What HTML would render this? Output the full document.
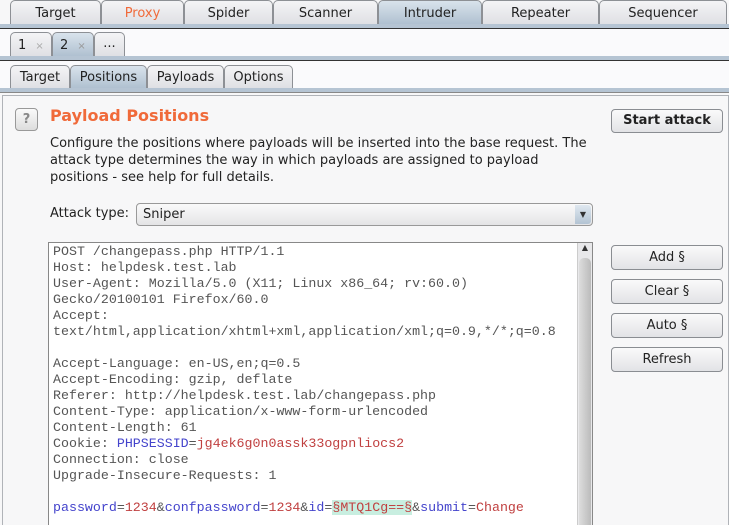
<!DOCTYPE html>
<html><head><style>
*{box-sizing:border-box;margin:0;padding:0}
html,body{width:729px;height:525px;overflow:hidden}
body{background:#f7f7f8;font-family:"DejaVu Sans","Liberation Sans",sans-serif;font-size:13px;color:#222;position:relative}
.abs{position:absolute}
.tab{position:absolute;border:1px solid #8d9095;border-bottom:none;border-radius:5px 5px 0 0;background:linear-gradient(#f4f4f6,#dedfe3);text-align:center;font-size:13px;color:#222}
.sel{background:linear-gradient(#d9e3ec,#aebfcf)}
.line{position:absolute;left:0;width:729px}
.btn{position:absolute;border:1px solid #8a8d92;border-radius:4px;background:linear-gradient(#fafafa,#e2e3e6);text-align:center;font-size:13px;color:#222}
pre{font-family:"Liberation Mono",monospace;font-size:13.3px;line-height:16px;color:#555}
.b{color:#4444cc}.r{color:#c04040}
</style></head><body>
<div class="tab" style="left:10px;top:0;width:91px;height:25px;line-height:25px">Target</div>
<div class="tab" style="left:101px;top:0;width:83px;height:25px;line-height:25px;color:#f06a3a">Proxy</div>
<div class="tab" style="left:184px;top:0;width:89px;height:25px;line-height:25px">Spider</div>
<div class="tab" style="left:273px;top:0;width:105px;height:25px;line-height:25px">Scanner</div>
<div class="tab sel" style="left:378px;top:0;width:104px;height:25px;line-height:25px">Intruder</div>
<div class="tab" style="left:482px;top:0;width:117px;height:25px;line-height:25px">Repeater</div>
<div class="tab" style="left:599px;top:0;width:128px;height:25px;line-height:25px">Sequencer</div>
<div class="line" style="top:24px;height:5px;background:#b5c4d3;border-bottom:1px solid #333"></div>
<div class="line" style="top:29px;height:28px;background:#fafafc"></div>
<div class="tab" style="left:10px;top:32px;width:42px;height:25px;line-height:25px;text-align:left;padding-left:7px">1 <span style="color:#aaa;font-size:10px;margin-left:5px">×</span></div>
<div class="tab sel" style="left:52px;top:32px;width:42px;height:25px;line-height:25px;text-align:left;padding-left:7px">2 <span style="color:#999;font-size:10px;margin-left:5px">×</span></div>
<div class="tab" style="left:94px;top:32px;width:31px;height:25px;line-height:22px">...</div>
<div class="line" style="top:56px;height:5px;background:#b5c4d3;border-bottom:1px solid #333"></div>
<div class="line" style="top:61px;height:28px;background:#fafafc"></div>
<div class="tab" style="left:10px;top:65px;width:60px;height:24px;line-height:24px">Target</div>
<div class="tab sel" style="left:70px;top:65px;width:77px;height:24px;line-height:24px">Positions</div>
<div class="tab" style="left:147px;top:65px;width:77px;height:24px;line-height:24px">Payloads</div>
<div class="tab" style="left:224px;top:65px;width:69px;height:24px;line-height:24px">Options</div>
<div class="line" style="top:88px;height:5px;background:#b5c4d3;border-bottom:1px solid #888"></div>
<div class="abs" style="left:2px;top:95px;width:727px;height:430px;border:1px solid #b0b3b8;border-bottom:none;background:#f7f7f8"></div>
<div class="abs" style="left:15px;top:108px;width:23px;height:23px;border:1px solid #999;border-radius:4px;background:linear-gradient(#fafafa,#ddd);text-align:center;line-height:21px;color:#888;font-weight:bold;font-size:13px">?</div>
<div class="abs" style="left:50px;top:106px;font-size:16px;font-weight:bold;color:#f06a3a">Payload Positions</div>
<div class="abs" style="left:50px;top:135px;width:548px;line-height:17px;font-size:13px">Configure the positions where payloads will be inserted into the base request. The attack type determines the way in which payloads are assigned to payload positions - see help for full details.</div>
<div class="abs" style="left:50px;top:206px">Attack type:</div>
<div class="abs" style="left:136px;top:203px;width:457px;height:23px;border:1px solid #999;border-radius:4px;background:linear-gradient(#fafafa,#e4e4e6);padding-left:6px;line-height:21px">Sniper</div>
<div class="abs" style="left:575px;top:205px;width:16px;height:19px;background:linear-gradient(#dfe8f0,#b3c3d3);border-radius:0 3px 3px 0;font-size:8px;text-align:center;line-height:19px;color:#333">▼</div>
<div class="btn" style="left:611px;top:109px;width:112px;height:24px;line-height:22px;font-weight:bold">Start attack</div>
<div class="abs" style="left:48px;top:242px;width:545px;height:283px;border:1px solid #888;border-bottom:none;background:#fff"></div>
<div class="abs" style="left:577px;top:243px;width:15px;height:282px;background:#e8e8ea;border-left:1px solid #ccc"></div>
<div class="abs" style="left:578px;top:243px;width:14px;height:12px;font-size:8px;text-align:center;color:#333">▲</div>
<div class="abs" style="left:579px;top:258px;width:12px;height:267px;background:linear-gradient(90deg,#ddd,#bbb);border-radius:5px 5px 0 0"></div>
<pre class="abs" style="left:53px;top:244px">POST /changepass.php HTTP/1.1
Host: helpdesk.test.lab
User-Agent: Mozilla/5.0 (X11; Linux x86_64; rv:60.0)
Gecko/20100101 Firefox/60.0
Accept:
text/html,application/xhtml+xml,application/xml;q=0.9,*/*;q=0.8

Accept-Language: en-US,en;q=0.5
Accept-Encoding: gzip, deflate
Referer: http://helpdesk.test.lab/changepass.php
Content-Type: application/x-www-form-urlencoded
Content-Length: 61
Cookie: <span class="b">PHPSESSID</span>=<span class="r">jg4ek6g0n0assk33ogpnliocs2</span>
Connection: close
Upgrade-Insecure-Requests: 1

<span class="b">password</span>=<span class="r">1234</span>&amp;<span class="b">confpassword</span>=<span class="r">1234</span>&amp;<span class="b">id</span>=<span class="r" style="background:#c8eee0">§MTQ1Cg==§</span>&amp;<span class="b">submit</span>=<span class="r">Change</span></pre>
<div class="btn" style="left:611px;top:245px;width:112px;height:25px;line-height:23px">Add §</div>
<div class="btn" style="left:611px;top:279px;width:112px;height:25px;line-height:23px">Clear §</div>
<div class="btn" style="left:611px;top:313px;width:112px;height:25px;line-height:23px">Auto §</div>
<div class="btn" style="left:611px;top:347px;width:112px;height:25px;line-height:23px">Refresh</div>
</body></html>
